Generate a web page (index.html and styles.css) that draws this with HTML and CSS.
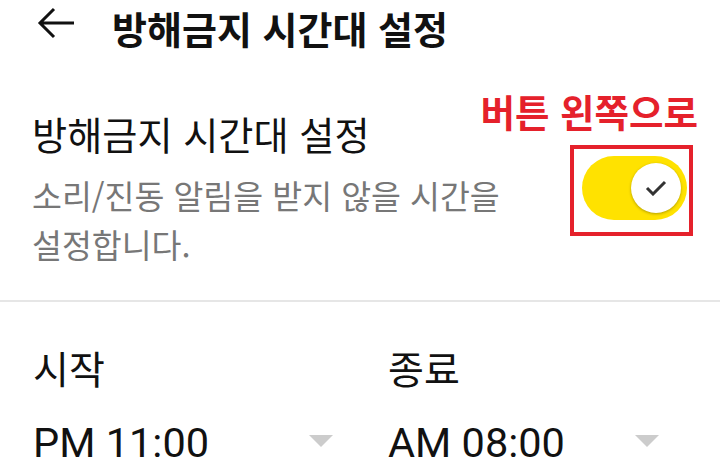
FILE: index.html
```html
<!DOCTYPE html>
<html lang="ko">
<head>
<meta charset="utf-8">
<link rel="stylesheet" href="styles.css">
</head>
<body>
<header class="appbar">
  <svg class="back" width="38" height="32" viewBox="0 0 38 32" aria-hidden="true">
    <path d="M37 16H3 M17 2L3 16L17 30" fill="none" stroke="#111" stroke-width="3" stroke-linecap="butt" stroke-linejoin="miter"/>
  </svg>
  <h1 class="appbar-title">방해금지 시간대 설정</h1>
</header>

<section class="setting-row">
  <div class="setting-text">
    <div class="setting-title">방해금지 시간대 설정</div>
    <div class="setting-desc">소리/진동 알림을 받지 않을 시간을 설정합니다.</div>
  </div>
  <div class="highlight">
    <span class="callout">버튼 왼쪽으로</span>
    <div class="switch">
      <div class="knob">
        <svg width="22" height="16" viewBox="0 0 22 16" aria-hidden="true">
          <path d="M2 8L8 14L20 2" fill="none" stroke="#333" stroke-width="3"/>
        </svg>
      </div>
    </div>
  </div>
</section>

<hr class="divider">

<section class="times">
  <div class="time-col">
    <div class="time-label">시작</div>
    <div class="time-value-row">
      <span class="time-value">PM 11:00</span>
      <span class="caret"></span>
    </div>
  </div>
  <div class="time-col">
    <div class="time-label">종료</div>
    <div class="time-value-row">
      <span class="time-value">AM 08:00</span>
      <span class="caret"></span>
    </div>
  </div>
</section>
</body>
</html>
```

FILE: styles.css
```css
html, body {
  margin: 0;
  padding: 0;
  background: #ffffff;
}
body {
  width: 720px;
  height: 472px;
  overflow: hidden;
  font-family: "Noto Sans CJK KR", "Noto Sans", sans-serif;
  color: #111111;
  word-break: keep-all;
}

.appbar {
  height: 55px;
  display: flex;
  align-items: flex-start;
  padding-left: 37px;
}
.back {
  display: block;
  margin-top: 7px;
}
.appbar-title {
  margin: 0 0 0 37px;
  font-size: 38px;
  font-weight: 700;
  line-height: 55px;
  white-space: nowrap;
}

.setting-row {
  display: flex;
  align-items: center;
  padding: 57px 27px 32px 32px;
}
.setting-text {
  flex: 1;
}
.setting-title {
  font-size: 38.2px;
  line-height: 44px;
  white-space: nowrap;
}
.setting-desc {
  margin-top: 14px;
  width: 500px;
  font-size: 32.5px;
  line-height: 49px;
  color: #777777;
}

.highlight {
  position: relative;
  border: 4px solid #e5212b;
  padding: 7px 0 12px 8px;
  width: 107px;
  height: 64px;
}
.callout {
  position: absolute;
  right: -9px;
  top: -58px;
  white-space: nowrap;
  font-size: 37.5px;
  font-weight: 700;
  line-height: 40px;
  color: #e5212b;
}
.switch {
  width: 105px;
  height: 64px;
  border-radius: 32px;
  background: #ffe200;
  display: flex;
  align-items: center;
  justify-content: flex-end;
  padding-right: 6px;
  box-sizing: border-box;
}
.knob {
  width: 50px;
  height: 50px;
  border-radius: 50%;
  background: #ffffff;
  box-shadow: 0 1px 3px rgba(0, 0, 0, 0.3);
  display: flex;
  align-items: center;
  justify-content: center;
}

.divider {
  margin: 0;
  border: 0;
  height: 2px;
  background: #e6e6e6;
}

.times {
  display: grid;
  grid-template-columns: 300px 271px;
  column-gap: 55px;
  padding: 43px 0 0 33px;
}
.time-label {
  font-size: 39px;
  line-height: 44px;
}
.time-value-row {
  margin-top: 30px;
  display: flex;
  align-items: center;
  justify-content: space-between;
}
.time-value {
  font-family: Roboto, "Noto Sans", sans-serif;
  font-size: 41.5px;
  line-height: 48px;
}
.caret {
  width: 0;
  height: 0;
  border-left: 12px solid transparent;
  border-right: 12px solid transparent;
  border-top: 12px solid #cccccc;
  margin-top: -4px;
}
```
